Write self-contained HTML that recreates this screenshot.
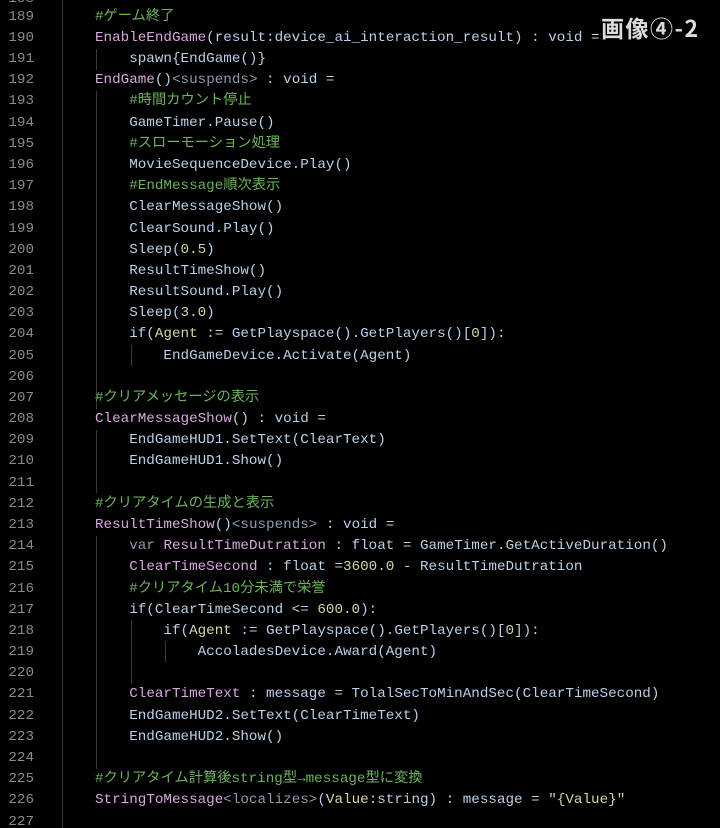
<!DOCTYPE html>
<html><head><meta charset="utf-8"><style>
html,body{margin:0;padding:0;background:#000;width:720px;height:828px;overflow:hidden;position:relative}
.l{position:absolute;left:0;height:21px;line-height:21px;white-space:pre;font-family:"Liberation Mono","Noto Sans CJK JP",monospace;font-size:14.25px;color:#b9d0e8}
.n{position:absolute;left:0;width:34px;text-align:right;color:#8a8a8a}
.t{position:absolute;left:95px}
.f{color:#d8a8df}.c{color:#6cb35a}.g{color:#8b9bb0}.d{color:#c7dca4}.a{color:#d7d6a8}.w{color:#c8d8ea}
.v{position:absolute;width:1px;background:#3a3a3a}
.title{position:absolute;left:601px;top:10px;font-family:"Noto Sans CJK JP",sans-serif;font-weight:bold;font-size:23px;color:#dcdcdc;letter-spacing:1.5px}
</style></head><body>
<div class="v" style="left:62px;top:0;height:828px"></div>
<div class="v" style="left:96px;top:49px;height:21px"></div>
<div class="v" style="left:96px;top:91px;height:318px"></div>
<div class="v" style="left:131px;top:345px;height:21px"></div>
<div class="v" style="left:96px;top:430px;height:63px"></div>
<div class="v" style="left:96px;top:536px;height:233px"></div>
<div class="v" style="left:131px;top:620px;height:64px"></div>
<div class="v" style="left:165px;top:641px;height:21px"></div>

<div class="l" style="top:-11px"><span class="n">188</span></div>
<div class="l" style="top:7px"><span class="n">189</span><span class="t c">#ゲーム終了</span></div>
<div class="l" style="top:28px"><span class="n">190</span><span class="t"><span class="f">EnableEndGame</span>(result:device_ai_interaction_result) : void =</span></div>
<div class="l" style="top:49px"><span class="n">191</span><span class="t">    spawn{EndGame()}</span></div>
<div class="l" style="top:70px"><span class="n">192</span><span class="t"><span class="f">EndGame</span>()<span class="g">&lt;suspends&gt;</span> : void =</span></div>
<div class="l" style="top:91px"><span class="n">193</span><span class="t">    <span class="c">#時間カウント停止</span></span></div>
<div class="l" style="top:113px"><span class="n">194</span><span class="t">    GameTimer.Pause()</span></div>
<div class="l" style="top:134px"><span class="n">195</span><span class="t">    <span class="c">#スローモーション処理</span></span></div>
<div class="l" style="top:155px"><span class="n">196</span><span class="t">    MovieSequenceDevice.Play()</span></div>
<div class="l" style="top:176px"><span class="n">197</span><span class="t">    <span class="c">#EndMessage順次表示</span></span></div>
<div class="l" style="top:197px"><span class="n">198</span><span class="t">    ClearMessageShow()</span></div>
<div class="l" style="top:219px"><span class="n">199</span><span class="t">    ClearSound.Play()</span></div>
<div class="l" style="top:240px"><span class="n">200</span><span class="t">    Sleep(<span class="d">0.5</span>)</span></div>
<div class="l" style="top:261px"><span class="n">201</span><span class="t">    ResultTimeShow()</span></div>
<div class="l" style="top:282px"><span class="n">202</span><span class="t">    ResultSound.Play()</span></div>
<div class="l" style="top:303px"><span class="n">203</span><span class="t">    Sleep(<span class="d">3.0</span>)</span></div>
<div class="l" style="top:324px"><span class="n">204</span><span class="t">    if(<span class="a">Agent</span> := GetPlayspace().GetPlayers()[<span class="d">0</span>]):</span></div>
<div class="l" style="top:346px"><span class="n">205</span><span class="t">        EndGameDevice.Activate(Agent)</span></div>
<div class="l" style="top:367px"><span class="n">206</span></div>
<div class="l" style="top:388px"><span class="n">207</span><span class="t c">#クリアメッセージの表示</span></div>
<div class="l" style="top:409px"><span class="n">208</span><span class="t"><span class="f">ClearMessageShow</span>() : void =</span></div>
<div class="l" style="top:430px"><span class="n">209</span><span class="t">    EndGameHUD1.SetText(ClearText)</span></div>
<div class="l" style="top:451px"><span class="n">210</span><span class="t">    EndGameHUD1.Show()</span></div>
<div class="l" style="top:473px"><span class="n">211</span></div>
<div class="l" style="top:494px"><span class="n">212</span><span class="t c">#クリアタイムの生成と表示</span></div>
<div class="l" style="top:515px"><span class="n">213</span><span class="t"><span class="f">ResultTimeShow</span>()<span class="g">&lt;suspends&gt;</span> : void =</span></div>
<div class="l" style="top:536px"><span class="n">214</span><span class="t">    <span class="g">var</span> <span class="f">ResultTimeDutration</span> : float = GameTimer.GetActiveDuration()</span></div>
<div class="l" style="top:557px"><span class="n">215</span><span class="t">    <span class="f">ClearTimeSecond</span> : float =<span class="d">3600.0</span> - ResultTimeDutration</span></div>
<div class="l" style="top:579px"><span class="n">216</span><span class="t">    <span class="c">#クリアタイム10分未満で栄誉</span></span></div>
<div class="l" style="top:600px"><span class="n">217</span><span class="t">    if(ClearTimeSecond &lt;= <span class="d">600.0</span>):</span></div>
<div class="l" style="top:621px"><span class="n">218</span><span class="t">        if(<span class="a">Agent</span> := GetPlayspace().GetPlayers()[<span class="d">0</span>]):</span></div>
<div class="l" style="top:642px"><span class="n">219</span><span class="t">            AccoladesDevice.Award(Agent)</span></div>
<div class="l" style="top:663px"><span class="n">220</span></div>
<div class="l" style="top:684px"><span class="n">221</span><span class="t">    <span class="f">ClearTimeText</span> : message = TolalSecToMinAndSec(ClearTimeSecond)</span></div>
<div class="l" style="top:706px"><span class="n">222</span><span class="t">    EndGameHUD2.SetText(ClearTimeText)</span></div>
<div class="l" style="top:727px"><span class="n">223</span><span class="t">    EndGameHUD2.Show()</span></div>
<div class="l" style="top:748px"><span class="n">224</span></div>
<div class="l" style="top:769px"><span class="n">225</span><span class="t c">#クリアタイム計算後string型→message型に変換</span></div>
<div class="l" style="top:790px"><span class="n">226</span><span class="t"><span class="f">StringToMessage</span><span class="g">&lt;localizes&gt;</span>(<span class="a">Value</span>:string) : message = <span class="d">"{Value}"</span></span></div>
<div class="l" style="top:812px"><span class="n">227</span></div>
<div class="title">画像④-2</div>
</body></html>
